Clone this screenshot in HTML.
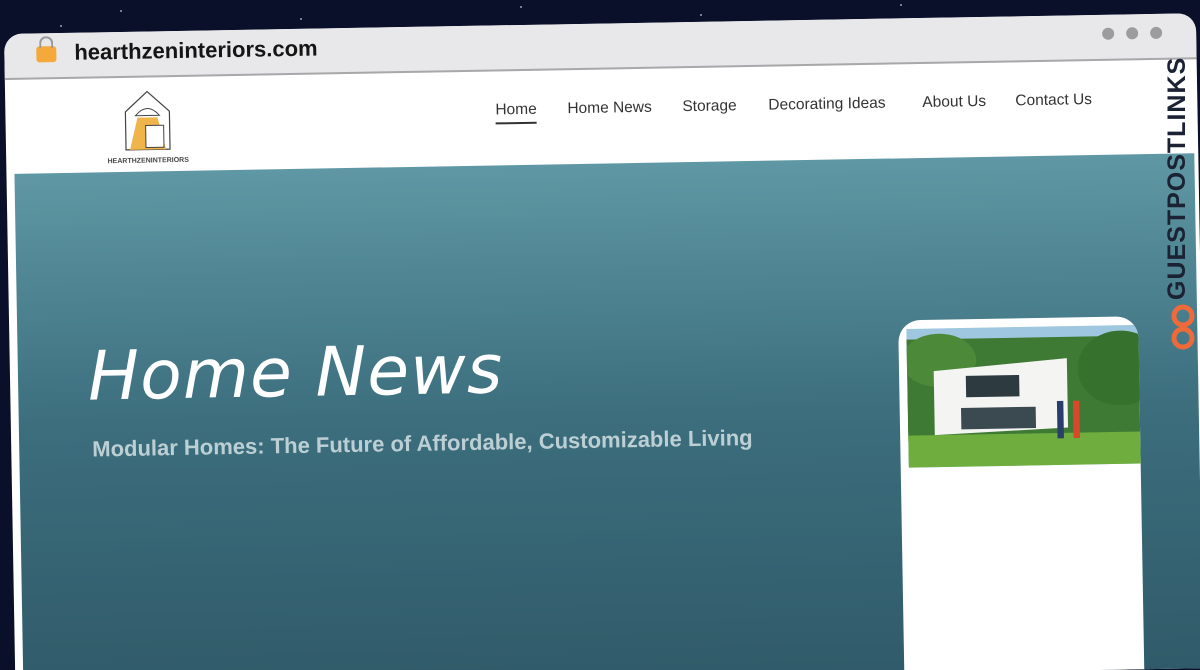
<!DOCTYPE html>
<html><head><meta charset="utf-8"><style>
html,body{margin:0;width:1200px;height:670px;overflow:hidden;background:#0a0f2a;font-family:"Liberation Sans",sans-serif;position:relative}
.star{position:absolute;width:2px;height:2px;background:#fff;border-radius:50%;opacity:.6}
.frame{position:absolute;left:4px;top:34px;width:1192px;height:655px;background:#fff;border-radius:18px 18px 0 0;transform:rotate(-1deg);transform-origin:0 0;overflow:hidden}
.bar{position:absolute;left:0;top:0;right:0;height:44px;background:#e8e8ea;border-bottom:2px solid #a8a8ab}
.url{position:absolute;left:70px;top:7px;font-size:22px;font-weight:bold;color:#151515}
.lock{position:absolute;left:32px;top:13px;width:20px;height:16px;background:#f5a93a;border-radius:3px}
.lock:before{content:"";position:absolute;left:3px;top:-10px;width:10px;height:10px;border:2px solid #999;border-bottom:none;border-radius:7px 7px 0 0}
.dot{position:absolute;top:13px;width:12px;height:12px;border-radius:50%;background:#9c9c9f}
.nav{position:absolute;top:76px;font-size:15.5px;color:#333}
.hero{position:absolute;left:8px;top:140px;width:1180px;height:560px;background:linear-gradient(#5f98a4,#3c6e7d 45%,#2e5766)}
.h1{position:absolute;left:70px;top:165px;font-family:"DejaVu Sans",sans-serif;font-style:italic;font-weight:200;font-size:68px;color:#fff;letter-spacing:1px}
.sub{position:absolute;left:73px;top:264px;font-size:22px;color:#bccfd4;font-weight:bold}
.card{position:absolute;left:889px;top:302px;width:240px;height:400px;background:#fff;border-radius:22px;overflow:hidden}
</style></head><body>
<div class="star" style="left:120px;top:10px"></div><div class="star" style="left:300px;top:18px"></div><div class="star" style="left:520px;top:6px"></div><div class="star" style="left:700px;top:14px"></div><div class="star" style="left:900px;top:4px"></div><div class="star" style="left:60px;top:25px"></div>
<div class="frame">
 <div class="bar"><div class="lock"></div><div class="url">hearthzeninteriors.com</div>
  <div class="dot" style="left:1098px"></div><div class="dot" style="left:1122px"></div><div class="dot" style="left:1146px"></div></div>
 <svg style="position:absolute;left:100px;top:56px" width="100" height="80" viewBox="0 0 100 80">
  <path d="M20 24 L42 4 L64 24 L64 62 L20 62 Z" fill="none" stroke="#444" stroke-width="1.2"/>
  <path d="M32 30 L52 30 L60 62 L24 62 Z" fill="#f0b54a"/>
  <path d="M30 28 Q42 14 54 28 Z" fill="#fff" stroke="#444"/>
  <rect x="40" y="38" width="18" height="22" fill="#fff" stroke="#444"/>
  <text x="42" y="75" font-size="7" font-weight="bold" text-anchor="middle" fill="#444" font-family="Liberation Sans">HEARTHZENINTERIORS</text>
 </svg>
 <div class="nav" style="left:490px;border-bottom:2px solid #333;padding-bottom:3px">Home</div>
 <div class="nav" style="left:562px">Home News</div>
 <div class="nav" style="left:677px">Storage</div>
 <div class="nav" style="left:763px">Decorating Ideas</div>
 <div class="nav" style="left:917px">About Us</div>
 <div class="nav" style="left:1010px">Contact Us</div>
 <div class="hero">
  <div class="h1">Home News</div>
  <div class="sub">Modular Homes: The Future of Affordable, Customizable Living</div>
 </div>
 <div class="card">
  <svg width="240" height="140" style="position:absolute;left:8px;top:8px" viewBox="0 0 225 130">
   <rect width="225" height="130" fill="#9fc7df"/>
   <rect y="10" width="225" height="95" fill="#3f7a34"/>
   <ellipse cx="30" cy="30" rx="35" ry="25" fill="#4c8a3a"/><ellipse cx="200" cy="40" rx="40" ry="35" fill="#36712d"/>
   <rect y="100" width="225" height="30" fill="#6fae3e"/>
   <path d="M25 40 L150 30 L150 95 L25 100 Z" fill="#f4f4f2"/>
   <rect x="55" y="45" width="50" height="20" fill="#2d3a40"/><rect x="50" y="75" width="70" height="20" fill="#3a4a50"/>
   <rect x="140" y="70" width="6" height="35" fill="#2a3e6e"/><rect x="155" y="70" width="6" height="35" fill="#d9482a"/>
  </svg>
 </div>
</div>
<div style="position:absolute;left:1163px;top:300px;transform:rotate(-90deg);transform-origin:0 0;font-size:25px;font-weight:bold;color:#1b2233;letter-spacing:1px;white-space:nowrap">GUESTPOSTLINKS</div>
<svg style="position:absolute;left:1170px;top:303px" width="26" height="50" viewBox="0 0 26 50"><path d="M13 4 a9 9 0 0 1 0 18 M13 22 a9 9 0 0 1 0 -18 M13 26 a9 9 0 0 1 0 18 a9 9 0 0 1 0 -18" fill="none" stroke="#ee6a3a" stroke-width="5"/></svg>
</body></html>
